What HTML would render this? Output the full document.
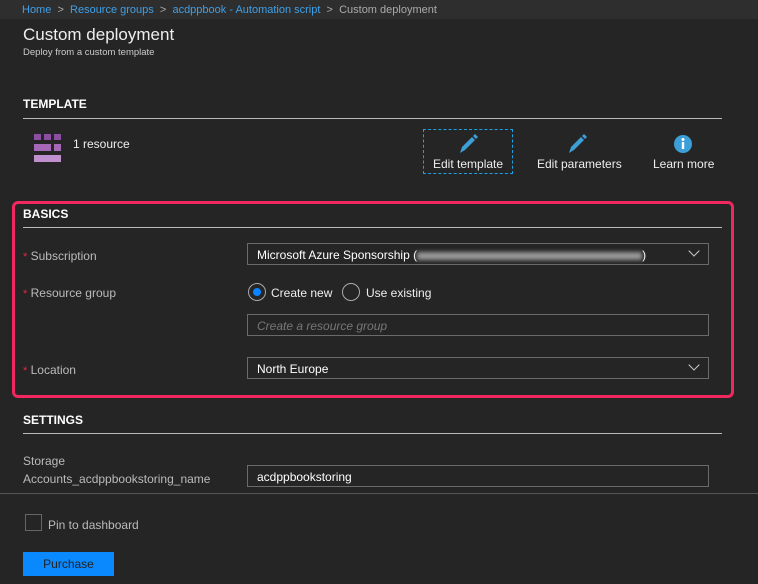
<!DOCTYPE html>
<html><head><style>
*{margin:0;padding:0;box-sizing:border-box}
body{width:758px;height:584px;background:#252525;font-family:"Liberation Sans",sans-serif;color:#ddd;position:relative;overflow:hidden;font-size:12px}
.a{position:absolute;white-space:nowrap}
.bc{left:0;top:0;width:758px;height:19px;background:#2e2e2e}
.h{font-weight:bold;color:#fff;font-size:12px}
.ln{height:1px;background:#bbb}
.inp{border:1px solid #6a6a6a;height:22px;background:#252525;color:#fff;padding:4px 9px 0;font-size:12px}
.lbl{color:#bbb;font-size:12px}
.star{color:#e8293c;font-size:11px}
.chev{position:absolute;right:10px;top:3px;width:8px;height:8px;border-right:1.3px solid #ccc;border-bottom:1.3px solid #ccc;transform:rotate(45deg)}
</style></head><body>
<div class="a bc"></div>
<div class="a" style="left:22px;top:4px;font-size:11px;color:#3fa0e8">Home <span style="color:#aaa">&nbsp;&gt;&nbsp;</span> Resource groups <span style="color:#aaa">&nbsp;&gt;&nbsp;</span> acdppbook - Automation script <span style="color:#aaa">&nbsp;&gt;&nbsp; Custom deployment</span></div>
<div class="a" style="left:23px;top:25px;font-size:17px;color:#eee">Custom deployment</div>
<div class="a" style="left:23px;top:47px;font-size:9.5px;color:#ccc">Deploy from a custom template</div>
<div class="a h" style="left:23px;top:97px">TEMPLATE</div>
<div class="a ln" style="left:23px;top:118px;width:699px"></div>
<svg class="a" style="left:34px;top:134px" width="28" height="29">
<rect x="0" y="0" width="7" height="6" fill="#8a4fa0"/><rect x="10" y="0" width="7" height="6" fill="#8a4fa0"/><rect x="20" y="0" width="7" height="6" fill="#8a4fa0"/>
<rect x="0" y="10" width="17" height="7" fill="#a468b6"/><rect x="20" y="10" width="7" height="7" fill="#a468b6"/>
<rect x="0" y="21" width="27" height="7" fill="#c08fcd"/></svg>
<div class="a" style="left:73px;top:137px;color:#eee">1 resource</div>
<div class="a" style="left:423px;top:129px;width:90px;height:45px;border:1px dashed #1ba1e2"></div>
<svg class="a" style="left:457px;top:133px" width="22" height="22"><path d="M3 20 L5 14 L15 4 L18 7 L8 17 Z" fill="#3d9fd8"/><path d="M16 3 L18 1 L21 4 L19 6 Z" fill="#3d9fd8"/></svg>
<svg class="a" style="left:566px;top:133px" width="22" height="22"><path d="M3 20 L5 14 L15 4 L18 7 L8 17 Z" fill="#3d9fd8"/><path d="M16 3 L18 1 L21 4 L19 6 Z" fill="#3d9fd8"/></svg>
<svg class="a" style="left:674px;top:135px" width="18" height="18"><circle cx="9" cy="9" r="9" fill="#3d9fd8"/><circle cx="9" cy="4.5" r="1.5" fill="#fff"/><rect x="7.8" y="7" width="2.4" height="7" fill="#fff"/></svg>
<div class="a" style="left:433px;top:157px;color:#eee">Edit template</div>
<div class="a" style="left:537px;top:157px;color:#eee">Edit parameters</div>
<div class="a" style="left:653px;top:157px;color:#eee">Learn more</div>

<div class="a" style="left:12px;top:201px;width:722px;height:197px;border:3px solid #f0285f;border-radius:6px"></div>
<div class="a h" style="left:23px;top:207px">BASICS</div>
<div class="a ln" style="left:23px;top:227px;width:699px"></div>
<div class="a lbl" style="left:23px;top:249px"><span class="star">*</span> Subscription</div>
<div class="a inp" style="left:247px;top:243px;width:462px">Microsoft Azure Sponsorship (<span style="display:inline-block;width:225px;height:8px;background:#999;filter:blur(2px);vertical-align:middle"></span>)<div class="chev"></div></div>
<div class="a lbl" style="left:23px;top:286px"><span class="star">*</span> Resource group</div>
<div class="a" style="left:248px;top:283px;width:18px;height:18px;border:1px solid #aaa;border-radius:50%"></div>
<div class="a" style="left:253px;top:288px;width:8px;height:8px;background:#0a84ff;border-radius:50%"></div>
<div class="a" style="left:271px;top:286px;color:#eee">Create new</div>
<div class="a" style="left:342px;top:283px;width:18px;height:18px;border:1px solid #aaa;border-radius:50%"></div>
<div class="a" style="left:366px;top:286px;color:#eee">Use existing</div>
<div class="a inp" style="left:247px;top:314px;width:462px;color:#777;font-style:italic">Create a resource group</div>
<div class="a lbl" style="left:23px;top:363px"><span class="star">*</span> Location</div>
<div class="a inp" style="left:247px;top:357px;width:462px">North Europe<div class="chev"></div></div>

<div class="a h" style="left:23px;top:413px">SETTINGS</div>
<div class="a ln" style="left:23px;top:433px;width:699px"></div>
<div class="a lbl" style="left:23px;top:454px">Storage</div>
<div class="a lbl" style="left:23px;top:472px">Accounts_acdppbookstoring_name</div>
<div class="a inp" style="left:247px;top:465px;width:462px">acdppbookstoring</div>
<div class="a" style="left:0;top:493px;width:758px;height:1px;background:#555"></div>
<div class="a" style="left:25px;top:514px;width:17px;height:17px;border:1px solid #666"></div>
<div class="a lbl" style="left:48px;top:518px">Pin to dashboard</div>
<div class="a" style="left:23px;top:552px;width:91px;height:24px;background:#0a89ff;color:#222;text-align:center;line-height:25px">Purchase</div>
</body></html>
